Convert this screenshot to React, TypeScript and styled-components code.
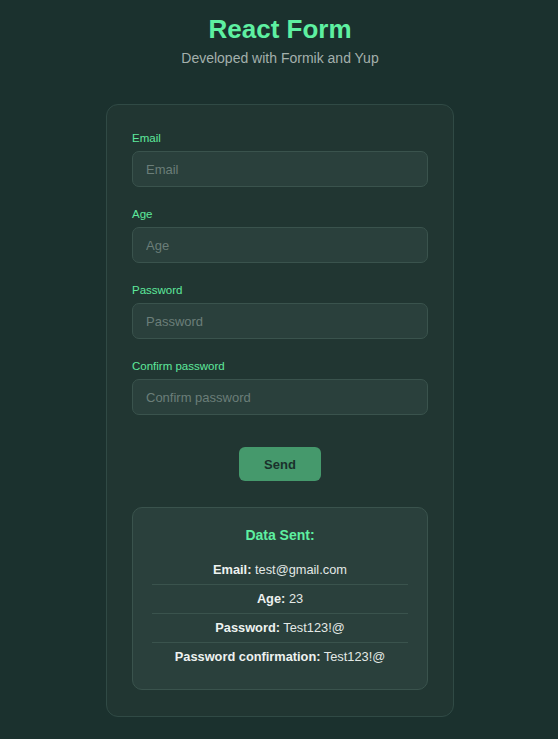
import React from 'react';
import styled, { createGlobalStyle } from 'styled-components';

interface FieldProps {
  label: string;
  type?: string;
}

interface SentRowProps {
  name: string;
  value: string;
}

const fields: FieldProps[] = [
  { label: 'Email', type: 'email' },
  { label: 'Age', type: 'text' },
  { label: 'Password', type: 'password' },
  { label: 'Confirm password', type: 'password' },
];

const sent: SentRowProps[] = [
  { name: 'Email', value: 'test@gmail.com' },
  { name: 'Age', value: '23' },
  { name: 'Password', value: 'Test123!@' },
  { name: 'Password confirmation', value: 'Test123!@' },
];

const Field = ({ label, type }: FieldProps) => (
  <FieldGroup>
    <Label>{label}</Label>
    <Input type={type} placeholder={label} />
  </FieldGroup>
);

const SentRow = ({ name, value }: SentRowProps) => (
  <Row>
    <strong>{name}:</strong> {value}
  </Row>
);

export default function App() {
  return (
    <>
      <GlobalStyle />
      <Page>
        <Header>
          <Title>React Form</Title>
          <Subtitle>Developed with Formik and Yup</Subtitle>
        </Header>
        <Card onSubmit={(e) => e.preventDefault()}>
          {fields.map((f) => (
            <Field key={f.label} {...f} />
          ))}
          <SendButton type="submit">Send</SendButton>
          <DataBox>
            <DataTitle>Data Sent:</DataTitle>
            {sent.map((r) => (
              <SentRow key={r.name} {...r} />
            ))}
          </DataBox>
        </Card>
      </Page>
    </>
  );
}

const GlobalStyle = createGlobalStyle`
  html, body {
    margin: 0;
    background: #1b312e;
    font-family: "Liberation Sans", Arial, sans-serif;
  }
  * {
    box-sizing: border-box;
  }
`;

const Page = styled.div`
  display: flex;
  flex-direction: column;
  align-items: center;
  min-height: 739px;
  padding: 0 0 24px 2px;
`;

const Header = styled.header`
  display: flex;
  flex-direction: column;
  align-items: center;
  padding-top: 14px;
  margin-bottom: 37px;
`;

const Title = styled.h1`
  margin: 0;
  font-size: 26px;
  line-height: 31px;
  font-weight: 700;
  color: #5ef0a1;
`;

const Subtitle = styled.p`
  margin: 5px 0 0;
  font-size: 14px;
  line-height: 17px;
  color: #a3b0ac;
`;

const Card = styled.form`
  display: flex;
  flex-direction: column;
  width: 348px;
  padding: 26px 25px;
  background: #213632;
  border: 1px solid #304a45;
  border-radius: 12px;
`;

const FieldGroup = styled.div`
  display: flex;
  flex-direction: column;
  margin-bottom: 20px;
  &:nth-of-type(4) {
    margin-bottom: 0;
  }
`;

const Label = styled.label`
  font-size: 11.5px;
  line-height: 14px;
  color: #5ee89c;
  margin-bottom: 6px;
`;

const Input = styled.input`
  height: 36px;
  padding: 0 13px;
  background: #2a403c;
  border: 1px solid #3a534d;
  border-radius: 7px;
  font-family: inherit;
  font-size: 13px;
  color: #e3e9e6;
  outline: none;
  &::placeholder {
    color: #6b7e79;
  }
`;

const SendButton = styled.button`
  align-self: center;
  width: 82px;
  height: 34px;
  margin: 32px 0 26px;
  background: #45996c;
  border: none;
  border-radius: 6px;
  font-family: inherit;
  font-size: 13px;
  font-weight: 700;
  color: #1a302b;
  cursor: pointer;
`;

const DataBox = styled.div`
  display: flex;
  flex-direction: column;
  padding: 19px 19px 18px;
  background: #2a403c;
  border: 1px solid #3a534d;
  border-radius: 10px;
`;

const DataTitle = styled.h3`
  margin: 0 0 12px;
  text-align: center;
  font-size: 14px;
  line-height: 17px;
  font-weight: 700;
  color: #5ef0a1;
`;

const Row = styled.div`
  padding: 6px 0 7px;
  text-align: center;
  font-size: 12.8px;
  line-height: 15px;
  color: #e3e9e6;
  border-bottom: 1px solid #3a534d;
  &:last-child {
    border-bottom: none;
  }
  strong {
    color: #eef2f0;
  }
`;
